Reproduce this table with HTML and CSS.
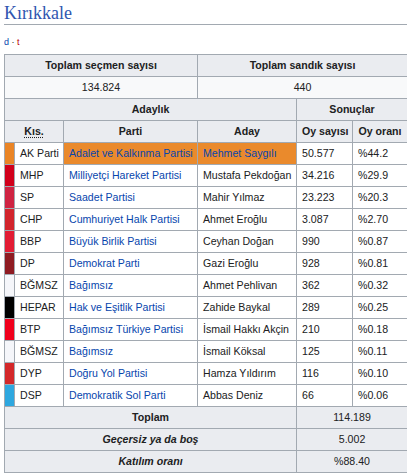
FILE: index.html
```html
<!DOCTYPE html>
<html lang="tr">
<head>
<meta charset="utf-8">
<title>Kırıkkale</title>
<link rel="stylesheet" href="styles.css">
</head>
<body>
<h1 class="title">Kırıkkale</h1>
<div class="navbar"><a class="nav-d" href="#">d</a> · <a class="nav-t" href="#">t</a></div>
<table class="results">
  <colgroup>
    <col class="c-strip"><col class="c-kis"><col class="c-parti"><col class="c-aday"><col class="c-oy"><col class="c-oran">
  </colgroup>
  <tr class="hdr"><th colspan="3">Toplam seçmen sayısı</th><th colspan="3">Toplam sandık sayısı</th></tr>
  <tr class="sub"><td colspan="3">134.824</td><td colspan="3">440</td></tr>
  <tr class="hdr"><th colspan="4">Adaylık</th><th colspan="2">Sonuçlar</th></tr>
  <tr class="hdr"><th colspan="2"><abbr class="abbr">Kıs.</abbr></th><th>Parti</th><th>Aday</th><th>Oy sayısı</th><th>Oy oranı</th></tr>
  <tr><td class="strip s-ak"></td><td>AK Parti</td><td class="win"><a href="#">Adalet ve Kalkınma Partisi</a></td><td class="win"><a href="#">Mehmet Saygılı</a></td><td>50.577</td><td>%44.2</td></tr>
  <tr><td class="strip s-mhp"></td><td>MHP</td><td><a href="#">Milliyetçi Hareket Partisi</a></td><td>Mustafa Pekdoğan</td><td>34.216</td><td>%29.9</td></tr>
  <tr><td class="strip s-sp"></td><td>SP</td><td><a href="#">Saadet Partisi</a></td><td>Mahir Yılmaz</td><td>23.223</td><td>%20.3</td></tr>
  <tr><td class="strip s-chp"></td><td>CHP</td><td><a href="#">Cumhuriyet Halk Partisi</a></td><td>Ahmet Eroğlu</td><td>3.087</td><td>%2.70</td></tr>
  <tr><td class="strip s-bbp"></td><td>BBP</td><td><a href="#">Büyük Birlik Partisi</a></td><td>Ceyhan Doğan</td><td>990</td><td>%0.87</td></tr>
  <tr><td class="strip s-dp"></td><td>DP</td><td><a href="#">Demokrat Parti</a></td><td>Gazi Eroğlu</td><td>928</td><td>%0.81</td></tr>
  <tr><td class="strip s-ind"></td><td>BĞMSZ</td><td><a href="#">Bağımsız</a></td><td>Ahmet Pehlivan</td><td>362</td><td>%0.32</td></tr>
  <tr><td class="strip s-hepar"></td><td>HEPAR</td><td><a href="#">Hak ve Eşitlik Partisi</a></td><td>Zahide Baykal</td><td>289</td><td>%0.25</td></tr>
  <tr><td class="strip s-btp"></td><td>BTP</td><td><a href="#">Bağımsız Türkiye Partisi</a></td><td>İsmail Hakkı Akçin</td><td>210</td><td>%0.18</td></tr>
  <tr><td class="strip s-ind"></td><td>BĞMSZ</td><td><a href="#">Bağımsız</a></td><td>İsmail Köksal</td><td>125</td><td>%0.11</td></tr>
  <tr><td class="strip s-dyp"></td><td>DYP</td><td><a href="#">Doğru Yol Partisi</a></td><td>Hamza Yıldırım</td><td>116</td><td>%0.10</td></tr>
  <tr><td class="strip s-dsp"></td><td>DSP</td><td><a href="#">Demokratik Sol Parti</a></td><td>Abbas Deniz</td><td>66</td><td>%0.06</td></tr>
  <tr class="foot"><th colspan="4">Toplam</th><td colspan="2">114.189</td></tr>
  <tr class="foot"><th colspan="4"><i>Geçersiz ya da boş</i></th><td colspan="2">5.002</td></tr>
  <tr class="foot"><th colspan="4"><i>Katılım oranı</i></th><td colspan="2">%88.40</td></tr>
</table>
</body>
</html>
```
FILE: styles.css
```css
body {
  margin: 0 4px;
  color: #202122;
  font-family: "Liberation Sans", Arial, sans-serif;
  background: #ffffff;
}
.title {
  margin: 0;
  padding-top: 2px;
  font-family: "Liberation Serif", "Times New Roman", serif;
  font-weight: normal;
  font-size: 18px;
  line-height: 22px;
  color: #3056b0;
  border-bottom: 1px solid #a2a9b1;
}
.navbar {
  margin-top: 12px;
  font-size: 9px;
  line-height: 10px;
  color: #202122;
}
.navbar a { text-decoration: none; }
.nav-d { color: #0645ad; }
.nav-t { color: #ba0000; }
.results {
  margin-top: 7px;
  width: 403px;
  table-layout: fixed;
  border-collapse: collapse;
  border: 1px solid #a2a9b1;
  font-size: 10.6px;
  line-height: 21px;
}
.c-strip { width: 10px; }
.c-kis { width: 49px; }
.c-parti { width: 134px; }
.c-aday { width: 99px; }
.c-oy { width: 56px; }
.c-oran { width: 55px; }
.results th,
.results td {
  border: 1px solid #a2a9b1;
  padding: 0 5px;
  white-space: nowrap;
  overflow: hidden;
  text-align: left;
}
.results th {
  background: #eaecf0;
  font-weight: bold;
  text-align: center;
}
.sub td {
  background: #f8f9fa;
  text-align: center;
}
.foot td {
  background: #eaecf0;
  text-align: center;
}
.results a {
  color: #0645ad;
  text-decoration: none;
}
.abbr {
  text-decoration: underline dotted;
  text-underline-offset: 2px;
}
.results td.strip { padding: 0; }
.win { background: #ea8a2c; }
.s-ak { background: #ea8526; }
.s-mhp { background: #d1001b; }
.s-sp { background: #cf2342; }
.s-chp { background: #d2242c; }
.s-bbp { background: #e21c34; }
.s-dp { background: #8f1b22; }
.s-ind { background: #f5f6fa; }
.s-hepar { background: #000000; }
.s-btp { background: #f0001c; }
.s-dyp { background: #d4282a; }
.s-dsp { background: #2ea7df; }
```
